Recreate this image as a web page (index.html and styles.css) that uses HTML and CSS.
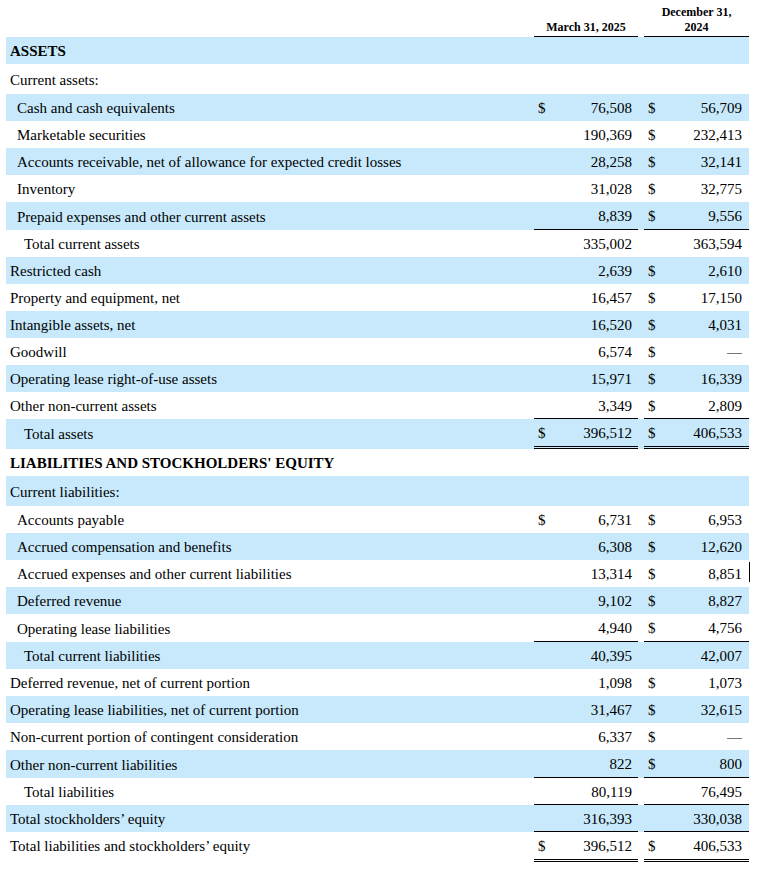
FILE: index.html
```html
<!DOCTYPE html>
<html lang="en">
<head>
<meta charset="utf-8">
<title>Balance Sheet</title>
<link rel="stylesheet" href="styles.css">
</head>
<body>
<div class="sheet">
  <div class="row hd">
    <div class="label"></div>
    <div class="hcell ul">March 31, 2025</div>
    <div class="gap"></div>
    <div class="hcell ul">December 31,<br>2024</div>
  </div>

  <div class="row shade"><div class="label b">ASSETS</div><div class="val"></div><div class="gap"></div><div class="val v2"></div></div>
  <div class="row tall"><div class="label">Current assets:</div><div class="val"></div><div class="gap"></div><div class="val v2"></div></div>
  <div class="row shade"><div class="label i1">Cash and cash equivalents</div><div class="val"><span>$</span><span>76,508</span></div><div class="gap"></div><div class="val v2"><span>$</span><span>56,709</span></div></div>
  <div class="row"><div class="label i1">Marketable securities</div><div class="val"><span></span><span>190,369</span></div><div class="gap"></div><div class="val v2"><span>$</span><span>232,413</span></div></div>
  <div class="row shade"><div class="label i1">Accounts receivable, net of allowance for expected credit losses</div><div class="val"><span></span><span>28,258</span></div><div class="gap"></div><div class="val v2"><span>$</span><span>32,141</span></div></div>
  <div class="row"><div class="label i1">Inventory</div><div class="val"><span></span><span>31,028</span></div><div class="gap"></div><div class="val v2"><span>$</span><span>32,775</span></div></div>
  <div class="row shade h28"><div class="label i1">Prepaid expenses and other current assets</div><div class="val ul"><span></span><span>8,839</span></div><div class="gap"></div><div class="val v2 ul"><span>$</span><span>9,556</span></div></div>
  <div class="row"><div class="label i2">Total current assets</div><div class="val"><span></span><span>335,002</span></div><div class="gap"></div><div class="val v2"><span></span><span>363,594</span></div></div>
  <div class="row shade"><div class="label">Restricted cash</div><div class="val"><span></span><span>2,639</span></div><div class="gap"></div><div class="val v2"><span>$</span><span>2,610</span></div></div>
  <div class="row"><div class="label">Property and equipment, net</div><div class="val"><span></span><span>16,457</span></div><div class="gap"></div><div class="val v2"><span>$</span><span>17,150</span></div></div>
  <div class="row shade"><div class="label">Intangible assets, net</div><div class="val"><span></span><span>16,520</span></div><div class="gap"></div><div class="val v2"><span>$</span><span>4,031</span></div></div>
  <div class="row"><div class="label">Goodwill</div><div class="val"><span></span><span>6,574</span></div><div class="gap"></div><div class="val v2"><span>$</span><span>—</span></div></div>
  <div class="row shade"><div class="label">Operating lease right-of-use assets</div><div class="val"><span></span><span>15,971</span></div><div class="gap"></div><div class="val v2"><span>$</span><span>16,339</span></div></div>
  <div class="row"><div class="label">Other non-current assets</div><div class="val ul"><span></span><span>3,349</span></div><div class="gap"></div><div class="val v2 ul"><span>$</span><span>2,809</span></div></div>
  <div class="row shade tall"><div class="label i2 up1">Total assets</div><div class="val dul"><span>$</span><span>396,512</span></div><div class="gap"></div><div class="val v2 dul"><span>$</span><span>406,533</span></div></div>

  <div class="row"><div class="label b">LIABILITIES AND STOCKHOLDERS' EQUITY</div><div class="val"></div><div class="gap"></div><div class="val v2"></div></div>
  <div class="row shade tall"><div class="label">Current liabilities:</div><div class="val"></div><div class="gap"></div><div class="val v2"></div></div>
  <div class="row"><div class="label i1">Accounts payable</div><div class="val"><span>$</span><span>6,731</span></div><div class="gap"></div><div class="val v2"><span>$</span><span>6,953</span></div></div>
  <div class="row shade"><div class="label i1">Accrued compensation and benefits</div><div class="val"><span></span><span>6,308</span></div><div class="gap"></div><div class="val v2"><span>$</span><span>12,620</span></div></div>
  <div class="row"><div class="label i1">Accrued expenses and other current liabilities</div><div class="val"><span></span><span>13,314</span></div><div class="gap"></div><div class="val v2 mark"><span>$</span><span>8,851</span></div></div>
  <div class="row shade"><div class="label i1">Deferred revenue</div><div class="val"><span></span><span>9,102</span></div><div class="gap"></div><div class="val v2"><span>$</span><span>8,827</span></div></div>
  <div class="row h28"><div class="label i1">Operating lease liabilities</div><div class="val ul"><span></span><span>4,940</span></div><div class="gap"></div><div class="val v2 ul"><span>$</span><span>4,756</span></div></div>
  <div class="row shade"><div class="label i2">Total current liabilities</div><div class="val"><span></span><span>40,395</span></div><div class="gap"></div><div class="val v2"><span></span><span>42,007</span></div></div>
  <div class="row"><div class="label">Deferred revenue, net of current portion</div><div class="val"><span></span><span>1,098</span></div><div class="gap"></div><div class="val v2"><span>$</span><span>1,073</span></div></div>
  <div class="row shade"><div class="label">Operating lease liabilities, net of current portion</div><div class="val"><span></span><span>31,467</span></div><div class="gap"></div><div class="val v2"><span>$</span><span>32,615</span></div></div>
  <div class="row"><div class="label">Non-current portion of contingent consideration</div><div class="val"><span></span><span>6,337</span></div><div class="gap"></div><div class="val v2"><span>$</span><span>—</span></div></div>
  <div class="row shade h28"><div class="label">Other non-current liabilities</div><div class="val ul"><span></span><span>822</span></div><div class="gap"></div><div class="val v2 ul"><span>$</span><span>800</span></div></div>
  <div class="row"><div class="label i2">Total liabilities</div><div class="val ul"><span></span><span>80,119</span></div><div class="gap"></div><div class="val v2 ul"><span></span><span>76,495</span></div></div>
  <div class="row shade"><div class="label">Total stockholders’ equity</div><div class="val ul"><span></span><span>316,393</span></div><div class="gap"></div><div class="val v2 ul"><span></span><span>330,038</span></div></div>
  <div class="row tall"><div class="label up">Total liabilities and stockholders’ equity</div><div class="val dul"><span>$</span><span>396,512</span></div><div class="gap"></div><div class="val v2 dul"><span>$</span><span>406,533</span></div></div>
  <div class="handle"></div>
</div>
</body>
</html>
```

FILE: styles.css
```css
html, body {
  margin: 0;
  padding: 0;
  background: #ffffff;
}

body {
  font-family: "Liberation Serif", "Times New Roman", serif;
  font-size: 15px;
  color: #000000;
}

.sheet {
  position: relative;
  width: 743px;
  margin-left: 6px;
}

.row {
  display: grid;
  grid-template-columns: 528px 104px 6px 105px;
  height: 27px;
}

.row.tall { height: 30px; }
.row.h28 { height: 28px; }
.row.hd { height: 37px; }

.shade { background: #c7e9fb; }

.label {
  box-sizing: border-box;
  display: flex;
  align-items: center;
  padding-left: 4px;
  padding-top: 2px;
  white-space: nowrap;
}

.label.up { padding-bottom: 3px; }
.label.up1 { padding-bottom: 2px; }
.label.i1 { padding-left: 11px; }
.label.i2 { padding-left: 18px; }
.label.b { font-weight: bold; }

.val {
  box-sizing: border-box;
  display: flex;
  justify-content: space-between;
  align-items: center;
  padding: 2px 6px 0 4px;
  white-space: nowrap;
}

.val.v2 { padding-right: 7px; }

.ul { border-bottom: 1px solid #000000; }
.dul { border-bottom: 3px double #000000; }

.hcell {
  box-sizing: border-box;
  display: flex;
  align-items: flex-end;
  justify-content: center;
  text-align: center;
  font-weight: bold;
  font-size: 12px;
  line-height: 15px;
  padding-bottom: 1px;
}

.mark { position: relative; }
.mark::after {
  content: "";
  position: absolute;
  right: -1px;
  top: 2px;
  width: 1px;
  height: 20px;
  background: #000000;
}

.handle {
  position: absolute;
  right: -6px;
  bottom: -6px;
  width: 4px;
  height: 4px;
  border: 1px solid #8a8a8a;
  background: #ffffff;
}
```
